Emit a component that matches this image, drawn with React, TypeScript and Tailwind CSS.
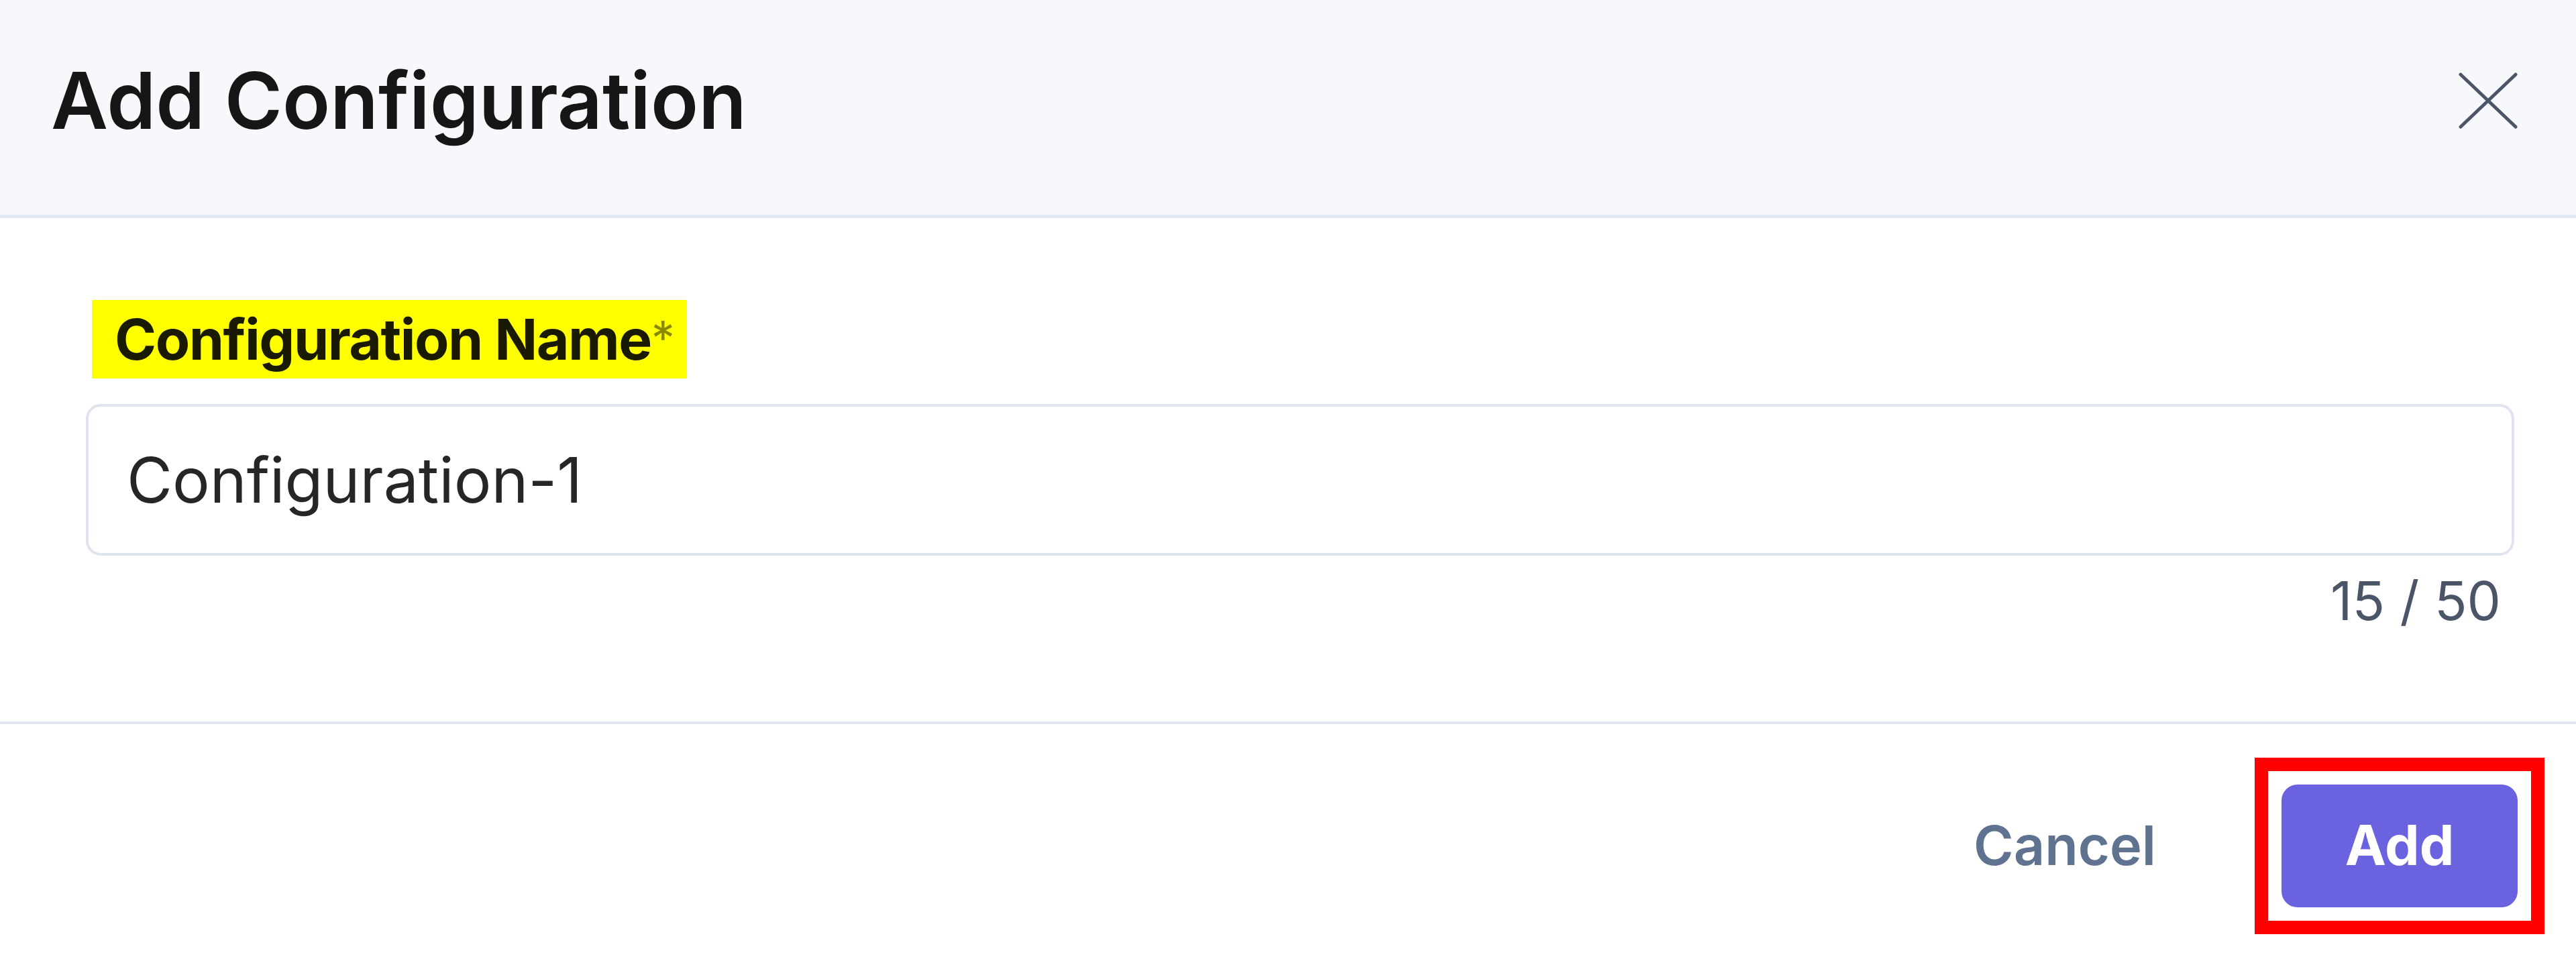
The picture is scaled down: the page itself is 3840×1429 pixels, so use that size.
import React from "react";

const font = { fontFamily: "Inter, 'Noto Sans', 'Liberation Sans', sans-serif" };

function CloseIcon() {
  return (
    <svg width="88" height="84" viewBox="0 0 88 84" fill="none" aria-hidden="true">
      <path d="M3 3 L85 81 M85 3 L3 81" stroke="#4a5568" strokeWidth="5" strokeLinecap="round" />
    </svg>
  );
}

export default function App() {
  const value = "Configuration-1";
  const max = 50;

  return (
    <div className="w-[3840px] h-[1429px] bg-white flex flex-col overflow-hidden" style={font}>
      {/* Dialog header */}
      <header className="h-[325px] shrink-0 flex items-center justify-between bg-[#f7f8fc] border-b-[5px] border-[#e2e6f0] pl-[76px] pr-[87px] pb-[20px]">
        <h1 className="text-[117px] font-semibold text-[#161616] leading-normal">Add Configuration</h1>
        <button type="button" className="flex items-center justify-center" aria-label="Close">
          <CloseIcon />
        </button>
      </header>

      {/* Form body */}
      <section className="shrink-0 h-[750px] pl-[128px] pr-[92px] pt-[122px] flex flex-col">
        <div className="pl-[9px]">
          <label className="inline-flex items-center h-[117px] pl-[34px] pr-[20px] bg-[#ffff00] text-[84px] font-bold text-[#1a1a00] leading-none tracking-[-1.5px]">
            Configuration Name<span className="text-[#8a8a00] self-start mt-[22px] text-[70px] font-normal">*</span>
          </label>
        </div>
        <div className="mt-[38px] h-[226px] rounded-[22px] border-[4px] border-[#dfe4ee] flex items-center pl-[57px]">
          <span className="text-[93px] text-[#262626] leading-none">{value}</span>
        </div>
        <div className="mt-[27px] pr-[20px] flex justify-end">
          <span className="text-[80px] text-[#4a5568] leading-none">
            {value.length} / {max}
          </span>
        </div>
      </section>

      {/* Dialog footer */}
      <footer className="flex-1 border-t-[4px] border-[#e2e6f0] flex items-center justify-end pr-[47px] pt-[12px]">
        <button type="button" className="mr-[147px] text-[81px] font-semibold text-[#5f7391] leading-none">
          Cancel
        </button>
        <div className="border-[20px] border-[#ff0000] p-[20px]">
          <button
            type="button"
            className="w-[352px] h-[183px] rounded-[24px] bg-[#6b62e0] text-white text-[82px] font-bold leading-none flex items-center justify-center"
          >
            Add
          </button>
        </div>
      </footer>
    </div>
  );
}
